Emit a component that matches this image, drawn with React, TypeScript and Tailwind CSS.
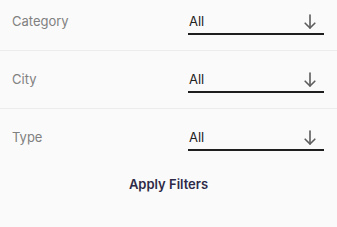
import React from 'react';

const filters = ['Category', 'City', 'Type'];

const ArrowDown: React.FC = () => (
  <svg width="12" height="15" viewBox="0 0 12 15" fill="none" stroke="#5c5c5c" strokeWidth="1.6" strokeLinecap="round" strokeLinejoin="round">
    <path d="M6 1v13" />
    <path d="M1.2 9.2L6 14l4.8-4.8" />
  </svg>
);

const FilterRow: React.FC<{ label: string; first?: boolean; last?: boolean }> = ({ label, first, last }) => (
  <div className={`flex items-start px-3 pb-[15px] ${first ? 'pt-[13px]' : 'pt-5'} ${last ? '' : 'border-b border-[#ececec]'}`}>
    <span className="w-[176px] text-[13px] leading-4 text-[#808080]">{label}</span>
    <div className="flex w-[136px] items-center justify-between border-b-2 border-[#1e1e1e] pb-1 pl-[1px] pr-2">
      <span className="text-[13px] leading-4 text-[#222]">All</span>
      <ArrowDown />
    </div>
  </div>
);

export default function App() {
  return (
    <div className="h-[227px] w-[337px] overflow-hidden bg-[#fafafa] font-['Inter',sans-serif]">
      {filters.map((f, i) => (
        <FilterRow key={f} label={f} first={i === 0} last={i === filters.length - 1} />
      ))}
      <div className="flex justify-center pt-[10px]">
        <button className="text-[13px] font-semibold leading-4 text-[#2e2a48]">Apply Filters</button>
      </div>
    </div>
  );
}
